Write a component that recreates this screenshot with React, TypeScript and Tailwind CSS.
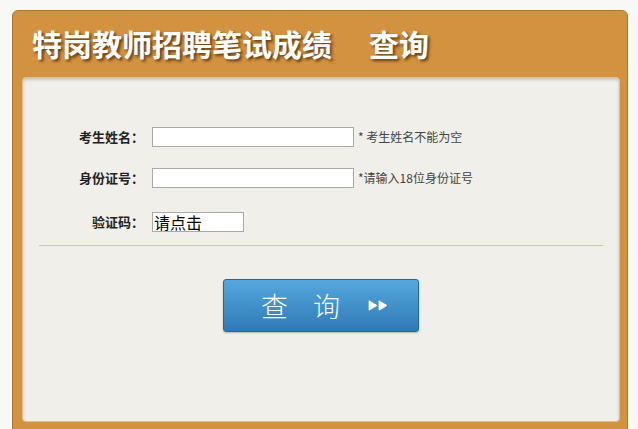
const cjk = "font-['Microsoft_YaHei','Noto_Sans_CJK_SC',sans-serif]";

function Arrows() {
  return (
    <svg width="20" height="11" viewBox="0 0 20 11" className="ml-[28px]">
      <path d="M1 0.8 L9 5.5 L1 10.2 Z" fill="#fff" strokeLinejoin="round" stroke="#fff" strokeWidth="0.8" />
      <path d="M11 0.8 L19 5.5 L11 10.2 Z" fill="#fff" strokeLinejoin="round" stroke="#fff" strokeWidth="0.8" />
    </svg>
  );
}

function Row(props: { label: string; children: React.ReactNode; className?: string }) {
  return (
    <div className={"flex items-center " + (props.className || "")}>
      <div className="w-[124px] pr-[3px] text-right text-[13px] font-bold text-[#222] leading-[20px]">
        {props.label}
      </div>
      <div className="ml-[5px] flex items-center">{props.children}</div>
    </div>
  );
}

export default function App() {
  return (
    <div className={"h-[429px] overflow-hidden bg-[#f8f8f6] pl-[12px] pt-[10px] " + cjk}>
      <div className="w-[616px] rounded-t-[6px] border border-[#b07428] bg-[#d39240] pb-[10px]">
        {/* header */}
        <div className="flex h-[66px] items-center pl-[19px] pb-[2px]">
          <span className="text-[30px] font-bold leading-none text-white [text-shadow:2px_2px_3px_rgba(60,30,0,0.75)]">
            特岗教师招聘笔试成绩
          </span>
          <span className="ml-[37px] text-[30px] font-bold leading-none text-white [text-shadow:2px_2px_3px_rgba(60,30,0,0.75)]">
            查询
          </span>
        </div>

        {/* panel */}
        <div className="ml-[9px] h-[345px] w-[598px] rounded-[4px] border border-[#e2c08e] bg-[#f0efe9] pt-[49px] shadow-[inset_0_2px_3px_rgba(0,0,0,0.18)]">
          <Row label="考生姓名：">
            <div className="h-[20px] w-[202px] border border-[#a9a9a9] bg-white" />
            <span className="ml-[4px] text-[12px] text-[#444]">* 考生姓名不能为空</span>
          </Row>
          <Row label="身份证号：" className="mt-[21px]">
            <div className="h-[20px] w-[202px] border border-[#a9a9a9] bg-white" />
            <span className="ml-[4px] text-[12px] text-[#444]">*请输入18位身份证号</span>
          </Row>
          <Row label="验证码：" className="mt-[24px]">
            <div className="flex h-[20px] w-[92px] items-center border border-[#a9a9a9] bg-white pl-[1px] text-[16px] leading-[16px] text-black">
              请点击
            </div>
          </Row>

          <div className="mx-[16px] mt-[13px] h-px bg-[#c9cb9c]" />

          <div className="mt-[33px] flex justify-center">
            <div className="flex h-[53px] w-[196px] items-center rounded-[3px] border border-[#27679c] bg-gradient-to-b from-[#55a8de] to-[#2f79b6] pl-[37px] text-white shadow-[0_1px_2px_rgba(0,0,0,0.25)]">
              <span className="text-[27px] font-light leading-none">查</span>
              <span className="ml-[25px] text-[27px] font-light leading-none">询</span>
              <Arrows />
            </div>
          </div>
        </div>
      </div>
    </div>
  );
}
